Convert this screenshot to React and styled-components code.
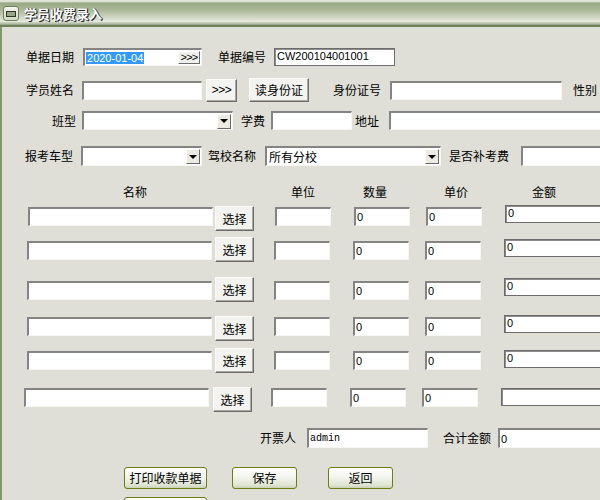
import styled, { createGlobalStyle } from 'styled-components';

const Global = createGlobalStyle`
  body {
    margin: 0;
    background: #dfdfd7;
  }
  * {
    box-sizing: border-box;
  }
`;

const Window = styled.div`
  width: 600px;
  height: 500px;
  overflow: hidden;
  background: #dfdfd7;
  font-family: "Noto Sans CJK SC", sans-serif;
  font-size: 12px;
  color: #000;
  display: flex;
  flex-direction: column;
`;

const TitleBar = styled.div`
  height: 27px;
  flex-shrink: 0;
  display: flex;
  align-items: center;
  padding-left: 3px;
  background: linear-gradient(
    to bottom,
    #cfd4c6 0,
    #f2f3ee 1px,
    #98a983 3px,
    #aab898 10px,
    #d8ddcd 19px,
    #e9ebe2 22px,
    #a6b293 23px,
    #c9cfbe 24px,
    #6e8259 25px,
    #6e8259 27px
  );
`;

const TitleIcon = styled.span`
  width: 16px;
  height: 15px;
  border: 1px solid #6f7c5e;
  border-radius: 3px;
  background: linear-gradient(#f4f5ee, #d3d9c6);
  display: flex;
  align-items: center;
  justify-content: center;
  &::after {
    content: '';
    width: 8px;
    height: 4px;
    border: 1px solid #2e3a24;
    background: #9aa68a;
  }
`;

const TitleText = styled.span`
  margin-left: 5px;
  color: #fff;
  font-weight: bold;
  font-size: 13px;
  text-shadow: 1px 1px 0 #222, 1px 0 0 #444;
`;

const Body = styled.div`
  flex: 1;
  border-left: 2px solid #7f9a68;
  display: flex;
  flex-direction: column;
`;

const Row = styled.div`
  display: flex;
  align-items: ${(p) => (p.$top ? 'flex-start' : 'center')};
  height: ${(p) => p.$h}px;
  margin-top: ${(p) => p.$mt}px;
  flex-shrink: 0;
  white-space: nowrap;
`;

const Label = styled.span`
  margin-left: ${(p) => p.$ml || 0}px;
  flex-shrink: 0;
  line-height: 14px;
`;

const Field = styled.div`
  position: relative;
  margin-left: ${(p) => p.$ml || 0}px;
  margin-top: ${(p) => p.$mt || 0}px;
  width: ${(p) => p.$w}px;
  height: ${(p) => p.$h || 19}px;
  flex-shrink: 0;
  display: flex;
  align-items: center;
  padding-left: 1px;
  background: #fff;
  border-top: 2px solid #848484;
  border-left: 2px solid #848484;
  border-right: 1px solid #f6f6f2;
  border-bottom: 1px solid #f6f6f2;
  font-family: ${(p) => (p.$mono ? '"Liberation Mono", monospace' : '"Liberation Sans", sans-serif')};
  font-size: ${(p) => (p.$mono ? 10 : 11)}px;
  overflow: hidden;
`;

const FlatField = styled.div`
  margin-left: ${(p) => p.$ml || 0}px;
  margin-top: ${(p) => p.$mt || 0}px;
  width: ${(p) => p.$w}px;
  height: 18px;
  flex-shrink: 0;
  padding: 1px 0 0 2px;
  background: #fff;
  border: 1px solid #6c6c6c;
  box-shadow: inset 1px 1px 0 #8c8c8c;
  font-family: "Liberation Sans", sans-serif;
  font-size: 11px;
  line-height: 13px;
`;

const Selected = styled.span`
  background: #3399ff;
  color: #fff;
  padding: 0 1px;
`;

const CjkValue = styled.span`
  font-family: "Noto Sans CJK SC", sans-serif;
  font-size: 12px;
  padding-left: 1px;
`;

const DropBtn = styled.span`
  margin-left: auto;
  margin-right: 1px;
  width: 14px;
  height: 15px;
  flex-shrink: 0;
  background: #eceae3;
  border: 1px solid;
  border-color: #fff #6a6a6a #6a6a6a #fff;
  display: flex;
  align-items: center;
  justify-content: center;
  &::after {
    content: '';
    border-left: 4px solid transparent;
    border-right: 4px solid transparent;
    border-top: 4px solid #000;
  }
`;

const ClassicBtn = styled.button`
  margin: 0;
  margin-left: ${(p) => p.$ml || 0}px;
  margin-top: ${(p) => p.$mt || 0}px;
  width: ${(p) => p.$w}px;
  height: ${(p) => p.$h}px;
  flex-shrink: 0;
  padding: 0;
  background: #f3f3ef;
  border: 1px solid;
  border-color: #fbfbf8 #6c6c6c #6c6c6c #fbfbf8;
  box-shadow: inset -1px -1px 0 #a9a9a2;
  font-family: "Noto Sans CJK SC", sans-serif;
  font-size: 12px;
  color: #000;
  line-height: 14px;
`;

const ArrowBtn = styled(ClassicBtn)`
  font-family: "Liberation Sans", sans-serif;
  font-size: 12px;
  letter-spacing: -0.5px;
`;

const InnerArrow = styled.span`
  position: absolute;
  right: 1px;
  top: 1px;
  width: 22px;
  height: 13px;
  background: #f0f0ec;
  border: 1px solid;
  border-color: #fff #6c6c6c #6c6c6c #fff;
  font-size: 11px;
  line-height: 11px;
  text-align: center;
  letter-spacing: -0.8px;
`;

const XpBtn = styled.button`
  margin: 0;
  margin-left: ${(p) => p.$ml}px;
  width: ${(p) => p.$w}px;
  height: 22px;
  flex-shrink: 0;
  padding: 0;
  border: 1px solid #6f7c12;
  border-radius: 3px;
  background: linear-gradient(#ffffff, #f3f5ee 45%, #dfe5d3 85%, #c9d2b6);
  font-family: "Noto Sans CJK SC", sans-serif;
  font-size: 12px;
  color: #000;
  line-height: 14px;
`;

const Head = styled.span`
  margin-left: ${(p) => p.$ml}px;
  line-height: 14px;
  flex-shrink: 0;
`;

const items = [
  { mt: 8, x: 26, gap: 2, btn: -1, amt: -2, amount: '0' },
  { mt: 15, x: 25, gap: 3, btn: -4, amt: -2, amount: '0' },
  { mt: 21, x: 25, gap: 3, btn: -4, amt: -3, amount: '0' },
  { mt: 17, x: 25, gap: 3, btn: -1, amt: -2, amount: '0' },
  { mt: 15, x: 25, gap: 3, btn: -3, amt: -1, amount: '0' },
  { mt: 18, x: 22, gap: 4, btn: -1, amt: 0, amount: '' },
];

function ItemRow({ item }) {
  return (
    <Row $h={19} $mt={item.mt} $top>
      <Field $ml={item.x} $w={185} />
      <ClassicBtn $ml={item.gap} $mt={item.btn} $w={39} $h={25}>选择</ClassicBtn>
      <Field $ml={22 - item.gap + 1} $w={56} />
      <Field $ml={23} $w={56}>0</Field>
      <Field $ml={16} $w={56}>0</Field>
      <FlatField $ml={23} $mt={item.amt} $w={100}>{item.amount}</FlatField>
    </Row>
  );
}

export default function App() {
  return (
    <Window>
      <Global />
      <TitleBar>
        <TitleIcon />
        <TitleText>学员收费录入</TitleText>
      </TitleBar>
      <Body>
        <Row $h={18} $mt={21}>
          <Label $ml={24}>单据日期</Label>
          <Field $ml={9} $w={119} $h={18}>
            <Selected>2020-01-04</Selected>
            <InnerArrow>&gt;&gt;&gt;</InnerArrow>
          </Field>
          <Label $ml={16}>单据编号</Label>
          <FlatField $ml={8} $w={121}>CW200104001001</FlatField>
        </Row>

        <Row $h={24} $mt={12}>
          <Label $ml={24}>学员姓名</Label>
          <Field $ml={8} $w={120} />
          <ArrowBtn $ml={4} $w={31} $h={23}>&gt;&gt;&gt;</ArrowBtn>
          <ClassicBtn $ml={12} $w={60} $h={24}>读身份证</ClassicBtn>
          <Label $ml={24}>身份证号</Label>
          <Field $ml={9} $w={172} />
          <Label $ml={11}>性别</Label>
        </Row>

        <Row $h={19} $mt={9}>
          <Label $ml={50}>班型</Label>
          <Field $ml={6} $w={151}>
            <DropBtn />
          </Field>
          <Label $ml={8}>学费</Label>
          <Field $ml={6} $w={81} />
          <Label $ml={3}>地址</Label>
          <Field $ml={10} $w={220} />
        </Row>

        <Row $h={20} $mt={16}>
          <Label $ml={23}>报考车型</Label>
          <Field $ml={8} $w={121} $h={20}>
            <DropBtn />
          </Field>
          <Label $ml={6}>驾校名称</Label>
          <Field $ml={9} $w={176} $h={20}>
            <CjkValue>所有分校</CjkValue>
            <DropBtn />
          </Field>
          <Label $ml={8}>是否补考费</Label>
          <Field $ml={12} $w={100} $h={20} />
        </Row>

        <Row $h={14} $mt={19}>
          <Head $ml={121}>名称</Head>
          <Head $ml={144}>单位</Head>
          <Head $ml={48}>数量</Head>
          <Head $ml={57}>单价</Head>
          <Head $ml={64}>金额</Head>
        </Row>

        {items.map((item, i) => (
          <ItemRow key={i} item={item} />
        ))}

        <Row $h={20} $mt={21}>
          <Label $ml={258}>开票人</Label>
          <Field $ml={11} $w={121} $h={20} $mono>admin</Field>
          <Label $ml={15}>合计金额</Label>
          <Field $ml={7} $w={110} $h={20}>0</Field>
        </Row>

        <Row $h={22} $mt={19}>
          <XpBtn $ml={122} $w={83}>打印收款单据</XpBtn>
          <XpBtn $ml={25} $w={65}>保存</XpBtn>
          <XpBtn $ml={31} $w={65}>返回</XpBtn>
        </Row>

        <Row $h={22} $mt={8}>
          <XpBtn $ml={122} $w={83} aria-label="更多" />
        </Row>
      </Body>
    </Window>
  );
}
